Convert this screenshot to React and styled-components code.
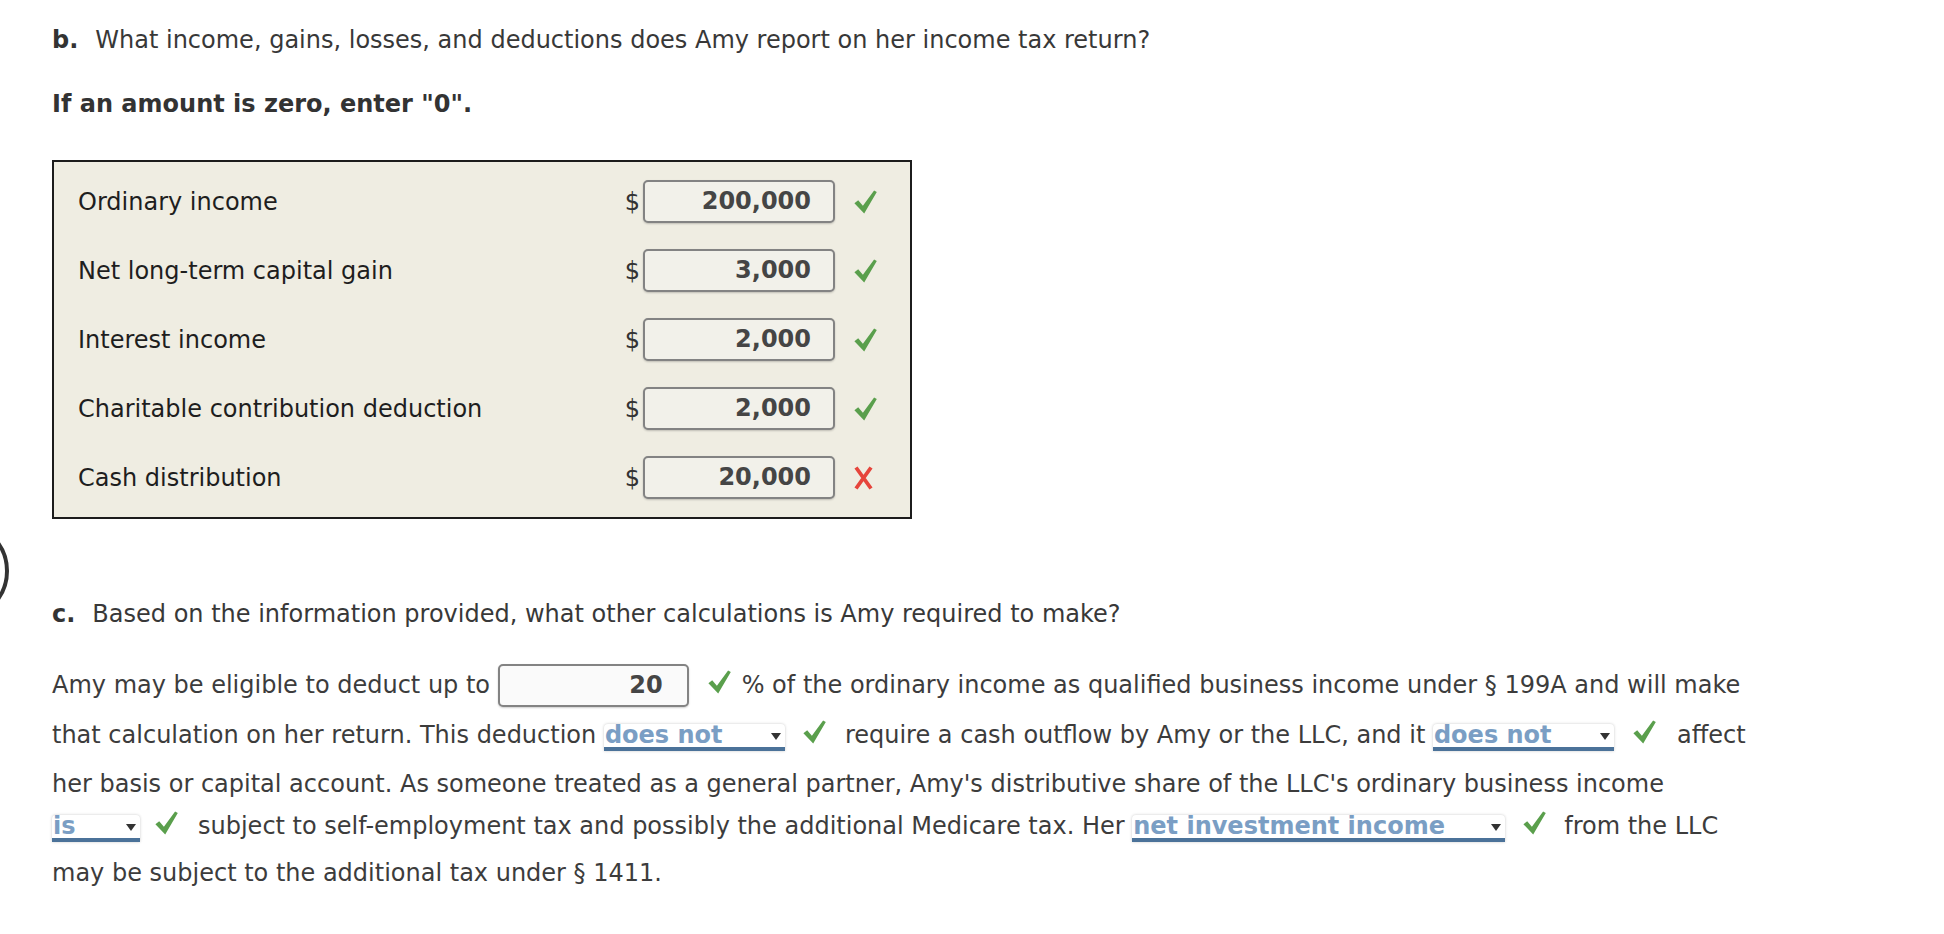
import React from 'react';
import styled, { createGlobalStyle } from 'styled-components';

const GlobalStyle = createGlobalStyle`
  body {
    margin: 0;
    background: #fff;
    font-family: "DejaVu Sans", Verdana, sans-serif;
    color: #383838;
  }
`;

const Page = styled.div`
  position: relative;
  padding: 25px 0 40px 52px;
  font-size: 24px;
`;

const SideButton = styled.div`
  position: absolute;
  left: -91px;
  top: 521px;
  width: 100px;
  height: 100px;
  box-sizing: border-box;
  border: 4px solid #333;
  border-radius: 50%;
`;

const Question = styled.div`
  line-height: 30px;
  margin-top: ${p => p.$top || 0}px;
`;

const Tag = styled.b`
  margin-right: 17px;
  color: #333;
`;

const Note = styled.div`
  font-weight: bold;
  line-height: 30px;
  margin-top: 34px;
  color: #333;
`;

const Table = styled.div`
  box-sizing: border-box;
  width: 860px;
  margin-top: 41px;
  border: 2px solid #1c1c1c;
  background: #efede2;
  padding: 18px 33px 18px 24px;
  display: flex;
  flex-direction: column;
  gap: 26px;
`;

const Row = styled.div`
  display: flex;
  align-items: center;
  height: 43px;
`;

const Label = styled.div`
  flex: 1;
  color: #1e1e1e;
`;

const Dollar = styled.span`
  margin-right: 3px;
  color: #333;
`;

const AmountBox = styled.span`
  display: inline-block;
  box-sizing: border-box;
  width: ${p => p.$w || 192}px;
  height: 43px;
  margin-bottom: ${p => p.$mb || 0}px;
  border: 2px solid #838383;
  border-radius: 5px;
  background: ${p => (p.$light ? '#fafafa' : '#f2f1ea')};
  box-shadow: 0 1px 2px rgba(0, 0, 0, 0.2);
  text-align: right;
  padding-right: ${p => p.$pad || 22}px;
  font-weight: bold;
  color: #454545;
  line-height: 39px;
  vertical-align: baseline;
`;

const MarkSlot = styled.span`
  display: flex;
  align-items: center;
  width: 23px;
  margin-left: 19px;
`;

const Para = styled.div`
  margin-top: 35px;
  line-height: 42px;
  color: #3c3c3c;
  white-space: nowrap;
`;

const Inline = styled.span`
  margin: ${p => p.$m || '0'};
`;

const Select = styled.span`
  display: inline-flex;
  justify-content: space-between;
  align-items: flex-start;
  box-sizing: border-box;
  width: ${p => p.$w}px;
  margin-bottom: ${p => p.$mb || 0}px;
  line-height: 23px;
  padding: 0 4px 0 1px;
  background: #fff;
  border-radius: 4px 4px 0 0;
  box-shadow: 0 0 3px rgba(0, 0, 0, 0.22);
  border-bottom: 4px solid #4b7299;
  color: #7a9ec4;
  font-weight: bold;
  vertical-align: baseline;

  svg {
    margin-top: 9px;
    flex-shrink: 0;
  }
`;

const CheckIcon = ({ style }) => (
  <svg width="23" height="24" viewBox="0 0 23 24" style={style}>
    <path d="M0.4 13.2 L4.2 10.2 L8.9 15.8 L20.1 0.4 L22.8 2 L10.2 23.6 Z" fill="#5a9f4c" />
  </svg>
);

const CrossIcon = () => (
  <svg width="19" height="24" viewBox="0 0 19 24">
    <path d="M2 1.5 L17 22.5 M17 1.5 L2 22.5" stroke="#e6453c" strokeWidth="3.8" fill="none" />
  </svg>
);

const Arrow = () => (
  <svg width="10" height="7" viewBox="0 0 10 7">
    <path d="M0 0 H10 L5 7 Z" fill="#333" />
  </svg>
);

const Mark = ({ m }) => (
  <Inline $m={m}>
    <CheckIcon style={{ verticalAlign: 'baseline', marginBottom: '-1px' }} />
  </Inline>
);

const rows = [
  { label: 'Ordinary income', value: '200,000', ok: true },
  { label: 'Net long-term capital gain', value: '3,000', ok: true },
  { label: 'Interest income', value: '2,000', ok: true },
  { label: 'Charitable contribution deduction', value: '2,000', ok: true },
  { label: 'Cash distribution', value: '20,000', ok: false },
];

const Dropdown = ({ w, mb, children }) => (
  <Select $w={w} $mb={mb}>
    <span>{children}</span>
    <Arrow />
  </Select>
);

export default function App() {
  return (
    <Page>
      <GlobalStyle />
      <SideButton />
      <Question>
        <Tag>b.</Tag>What income, gains, losses, and deductions does Amy report on her income tax return?
      </Question>
      <Note>If an amount is zero, enter "0".</Note>
      <Table>
        {rows.map(r => (
          <Row key={r.label}>
            <Label>{r.label}</Label>
            <Dollar>$</Dollar>
            <AmountBox>{r.value}</AmountBox>
            <MarkSlot>{r.ok ? <CheckIcon /> : <CrossIcon />}</MarkSlot>
          </Row>
        ))}
      </Table>
      <Question $top={80}>
        <Tag>c.</Tag>Based on the information provided, what other calculations is Amy required to make?
      </Question>
      <Para>
        Amy may be eligible to deduct up to{' '}
        <AmountBox $w={191} $pad={24} $mb={7} $light>20</AmountBox>
        <Mark m="0 11px 0 19px" />
        % of the ordinary income as qualified business income under § 199A and will make
        <br />
        that calculation on her return. This deduction{' '}
        <Dropdown w={181} mb={12}>does not</Dropdown>
        <Mark m="0 19px 0 18px" />
        require a cash outflow by Amy or the LLC, and it{' '}
        <Dropdown w={181} mb={12}>does not</Dropdown>
        <Mark m="0 21px 0 19px" />
        affect
        <br />
        her basis or capital account. As someone treated as a general partner, Amy's distributive share of the LLC's ordinary business income
        <br />
        <Dropdown w={88} mb={10}>is</Dropdown>
        <Mark m="0 20px 0 15px" />
        subject to self-employment tax and possibly the additional Medicare tax. Her{' '}
        <Dropdown w={373} mb={10}>net investment income</Dropdown>
        <Mark m="0 18px 0 18px" />
        from the LLC
        <br />
        may be subject to the additional tax under § 1411.
      </Para>
    </Page>
  );
}
